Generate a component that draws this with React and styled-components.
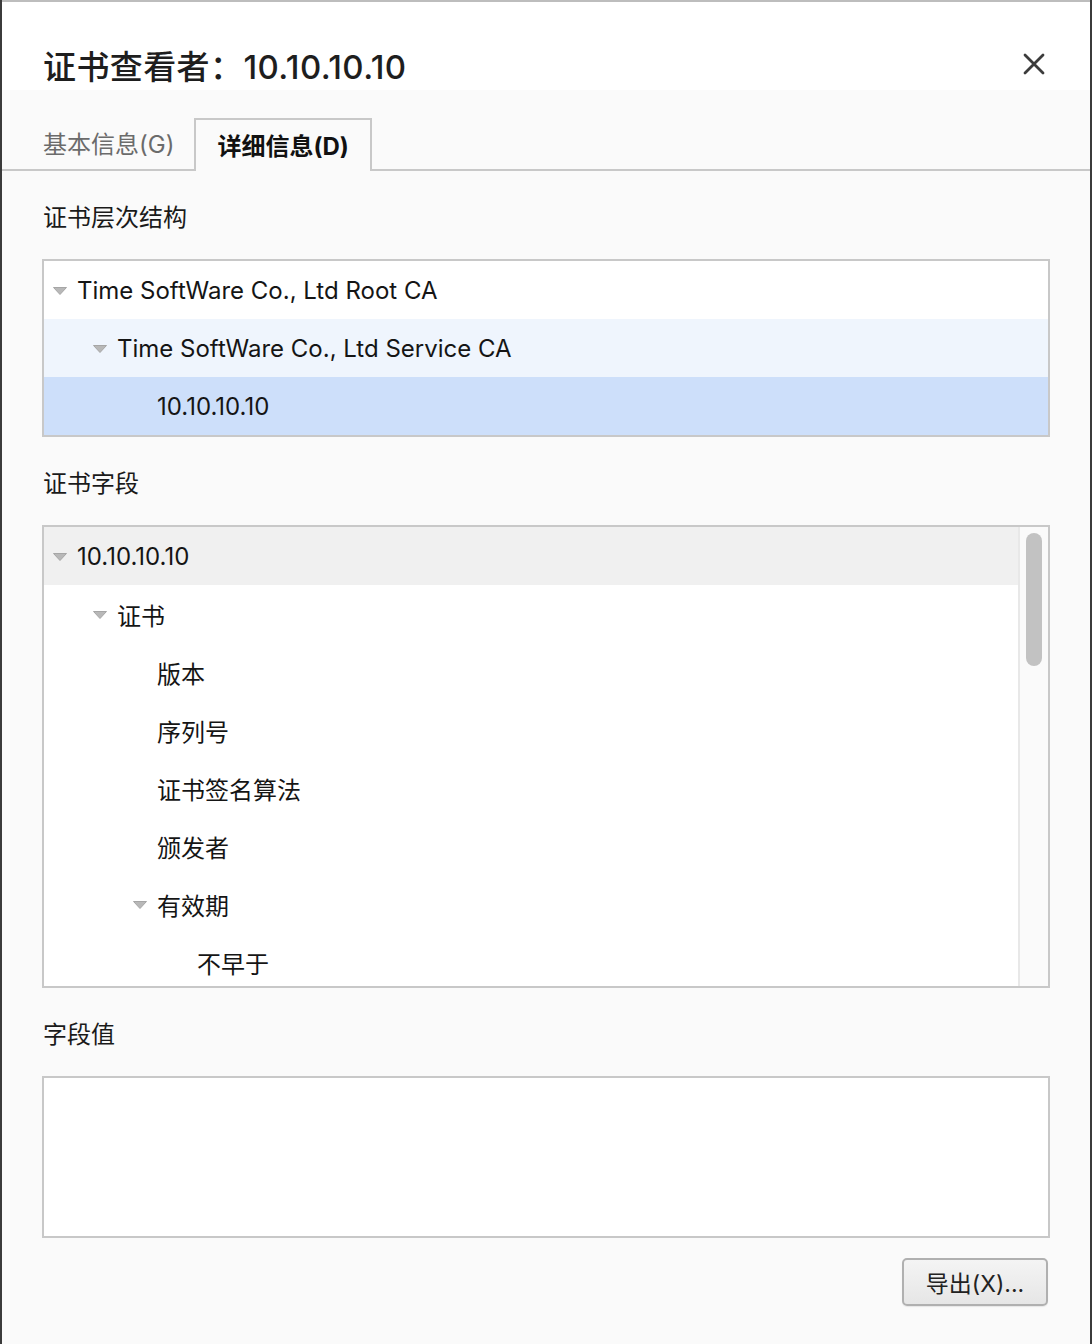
import React from 'react'
import styled, { createGlobalStyle } from 'styled-components'

const GlobalStyle = createGlobalStyle`
  html, body {
    margin: 0;
    padding: 0;
    background: #3b3b3b;
  }
  * { box-sizing: border-box; }
`

const font = `Inter, "Noto Sans CJK SC", "Noto Sans", sans-serif`

const Dialog = styled.div`
  width: 1088px;
  height: 1344px;
  margin: 0 2px;
  background: #fafafa;
  border-top: 2px solid #bdbdbd;
  font-family: ${font};
  color: #1a1a1a;
  display: flex;
  flex-direction: column;
`

const Header = styled.div`
  height: 88px;
  background: #ffffff;
  display: flex;
  align-items: flex-end;
  justify-content: space-between;
  padding: 0 43px 0 41px;
`

const Title = styled.h1`
  margin: 0 0 1px;
  font-size: 33px;
  font-weight: 500;
  line-height: 44px;
  color: #1e1e1e;
  letter-spacing: 0.4px;
`

const CloseButton = styled.button`
  border: none;
  background: transparent;
  padding: 0;
  width: 26px;
  height: 26px;
  margin-bottom: 13px;
  cursor: pointer;
  display: flex;
  align-items: center;
  justify-content: center;
`

const TabBar = styled.div`
  display: flex;
  align-items: flex-end;
  height: 81px;
  padding-left: 41px;
  border-bottom: 2px solid #c8c8c8;
`

const Tab = styled.div`
  height: ${({ $active }) => ($active ? '53px' : '50px')};
  padding: 0 ${({ $active }) => ($active ? '21px' : '0')} ${({ $active }) => ($active ? '3px' : '4px')};
  margin-left: ${({ $active }) => ($active ? '20px' : '0')};
  margin-bottom: ${({ $active }) => ($active ? '-2px' : '0')};
  display: flex;
  align-items: center;
  font-size: 24px;
  font-weight: ${({ $active }) => ($active ? 700 : 400)};
  color: ${({ $active }) => ($active ? '#111' : '#6b6b6b')};
  background: #fafafa;
  border: ${({ $active }) => ($active ? '2px solid #c8c8c8' : 'none')};
  border-bottom: none;
`

const Content = styled.div`
  flex: 1;
  padding: 0 40px;
  display: flex;
  flex-direction: column;
`

const SectionLabel = styled.div`
  font-size: 24px;
  line-height: 30px;
  margin: ${({ $top }) => $top}px 0 0 1px;
  color: #1a1a1a;
`

const Box = styled.div`
  margin-top: 26px;
  border: 2px solid #c8c8c8;
  background: #ffffff;
  height: ${({ $h }) => $h}px;
  display: flex;
  overflow: hidden;
`

const Rows = styled.div`
  flex: 1;
  display: flex;
  flex-direction: column;
`

const Row = styled.div`
  height: 58px;
  flex-shrink: 0;
  display: flex;
  align-items: center;
  padding-left: ${({ $level }) => 8 + $level * 40}px;
  padding-top: 1px;
  background: ${({ $bg }) => $bg || 'transparent'};
  font-size: 24px;
  color: #151515;
`

const Caret = styled.span`
  width: 16px;
  height: 24px;
  margin-right: 9px;
  flex-shrink: 0;
  display: flex;
  align-items: center;
  justify-content: center;
`

const Spacer = styled.span`
  width: 25px;
  flex-shrink: 0;
`

const ScrollTrack = styled.div`
  width: 30px;
  background: #fafafa;
  border-left: 2px solid #e8e8e8;
  padding: 6px 0 0 6px;
`

const ScrollThumb = styled.div`
  width: 16px;
  height: 133px;
  border-radius: 8px;
  background: #c2c2c2;
`

const Footer = styled.div`
  display: flex;
  justify-content: flex-end;
  margin-top: 20px;
  padding-right: 2px;
`

const ExportButton = styled.button`
  width: 146px;
  height: 48px;
  border: 2px solid #b0b0b0;
  border-radius: 5px;
  background: linear-gradient(#f4f4f4, #e6e6e6);
  box-shadow: 0 1px 1px rgba(0, 0, 0, 0.08);
  font-family: ${font};
  font-size: 23px;
  color: #222;
  padding: 0;
`

function Triangle() {
  return (
    <svg width="16" height="10" viewBox="0 0 16 10">
      <path d="M1.5 1.5 L14.5 1.5 L8 8.5 Z" fill="#b8b8b8" stroke="#a6a6a6" strokeWidth="1" strokeLinejoin="round" />
    </svg>
  )
}

function TreeRow({ level, open, bg, children }) {
  return (
    <Row $level={level} $bg={bg}>
      {open ? <Caret><Triangle /></Caret> : <Spacer />}
      <span>{children}</span>
    </Row>
  )
}

const hierarchy = [
  { level: 0, open: true, text: 'Time SoftWare Co., Ltd Root CA' },
  { level: 1, open: true, text: 'Time SoftWare Co., Ltd Service CA', bg: '#eff5fd' },
  { level: 2, open: false, text: '10.10.10.10', bg: '#cddffa' },
]

const fields = [
  { level: 0, open: true, text: '10.10.10.10', bg: '#f0f0f0' },
  { level: 1, open: true, text: '证书' },
  { level: 2, open: false, text: '版本' },
  { level: 2, open: false, text: '序列号' },
  { level: 2, open: false, text: '证书签名算法' },
  { level: 2, open: false, text: '颁发者' },
  { level: 2, open: true, text: '有效期' },
  { level: 3, open: false, text: '不早于' },
]

export default function App() {
  return (
    <>
      <GlobalStyle />
      <Dialog>
        <Header>
          <Title>证书查看者：10.10.10.10</Title>
          <CloseButton aria-label="关闭">
            <svg width="24" height="24" viewBox="0 0 24 24">
              <path d="M3 3 L21 21 M21 3 L3 21" stroke="#3c3c3c" strokeWidth="2.8" strokeLinecap="round" />
            </svg>
          </CloseButton>
        </Header>

        <TabBar>
          <Tab>基本信息(G)</Tab>
          <Tab $active>详细信息(D)</Tab>
        </TabBar>

        <Content>
          <SectionLabel $top={32}>证书层次结构</SectionLabel>
          <Box $h={178}>
            <Rows>
              {hierarchy.map((r, i) => (
                <TreeRow key={i} level={r.level} open={r.open} bg={r.bg}>{r.text}</TreeRow>
              ))}
            </Rows>
          </Box>

          <SectionLabel $top={32}>证书字段</SectionLabel>
          <Box $h={463}>
            <Rows>
              {fields.map((r, i) => (
                <TreeRow key={i} level={r.level} open={r.open} bg={r.bg}>{r.text}</TreeRow>
              ))}
            </Rows>
            <ScrollTrack>
              <ScrollThumb />
            </ScrollTrack>
          </Box>

          <SectionLabel $top={32}>字段值</SectionLabel>
          <Box $h={162} />

          <Footer>
            <ExportButton>导出(X)...</ExportButton>
          </Footer>
        </Content>
      </Dialog>
    </>
  )
}
